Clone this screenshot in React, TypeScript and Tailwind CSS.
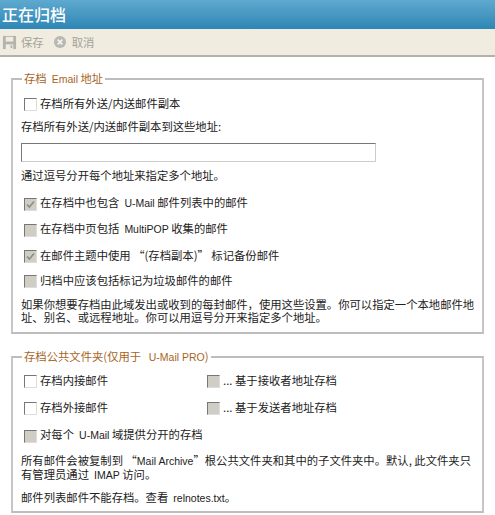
import React from "react";

const font = { fontFamily: '"Noto Sans CJK SC", sans-serif' };

function L({ children }: { children: React.ReactNode }) {
  return (
    <span className="text-[10.5px]" style={{ fontFamily: '"Liberation Sans", sans-serif' }}>
      {children}
    </span>
  );
}

function Check({ on, dim }: { on?: boolean; dim?: boolean }) {
  return (
    <span
      className={`inline-flex h-[13px] w-[13px] shrink-0 items-center justify-center border border-t-[#777] border-l-[#777] border-r-[#ddd] border-b-[#ddd] ${
        dim ? "bg-[#cfcdc4]" : "bg-white"
      }`}
    >
      {on && (
        <svg width="9" height="9" viewBox="0 0 9 9" fill="none" stroke="#8d8d88" strokeWidth="1.6">
          <path d="M1 4.5 L3.4 7 L8 1.5" />
        </svg>
      )}
    </span>
  );
}

function Row({ children, on, dim, className = "" }: { children: React.ReactNode; on?: boolean; dim?: boolean; className?: string }) {
  return (
    <div className={`flex items-center gap-[3px] ${className}`}>
      <Check on={on} dim={dim} />
      <span className="-translate-y-[1px] whitespace-nowrap">{children}</span>
    </div>
  );
}

export default function App() {
  return (
    <div className="h-[515px] w-[495px] overflow-hidden bg-white text-[11.33px] leading-[13px] text-[#222]" style={font}>
      <div className="flex h-[29px] items-center bg-gradient-to-b from-[#5ea9cf] to-[#2d86b5] pl-[2px] text-[16px] font-medium text-white">
        正在归档
      </div>
      <div className="flex h-[28px] items-center border-b-2 border-[#b3b1a8] bg-[#f0ecdf] pl-[2px] text-[#a3a29b]">
        <svg width="15" height="15" viewBox="0 0 16 16">
          <path d="M1 1h14v14H1z" fill="#b4b4ae" />
          <path d="M4 2h8v5H4z" fill="#f0ecdf" />
          <path d="M4 10h8v5H4z" fill="#f0ecdf" />
          <path d="M9 11h2v3H9z" fill="#b4b4ae" />
        </svg>
        <span className="ml-[4px]">保存</span>
        <svg className="ml-[9px]" width="14" height="14" viewBox="0 0 15 15">
          <circle cx="7.5" cy="7.5" r="6.5" fill="#b9b9b3" />
          <path d="M5 5l5 5M10 5l-5 5" stroke="#f4f4f0" strokeWidth="1.8" />
        </svg>
        <span className="ml-[5px]">取消</span>
      </div>

      <fieldset className="mx-[11px] mt-[15px] h-[262px] border-2 border-[#bdbdbd] border-x-[#c6c6c6] pl-[8px] pr-[6px]">
        <legend className="ml-[1px] px-[2px] text-[#a8651f]">
          存档&nbsp;&nbsp;<L>Email</L>&nbsp;地址
        </legend>
        <Row className="mt-[12px] ml-[3px]">存档所有外送/内送邮件副本</Row>
        <p className="mt-[9px]">存档所有外送/内送邮件副本到这些地址:</p>
        <input
          readOnly
          className="mt-[10px] block h-[19px] w-[355px] border border-t-[#777] border-l-[#777] border-r-[#ccc] border-b-[#ccc] bg-white"
        />
        <p className="mt-[7px]">通过逗号分开每个地址来指定多个地址。</p>
        <Row className="mt-[15px] ml-[3px]" on dim>
          在存档中也包含&nbsp;&nbsp;<L>U-Mail</L>&nbsp;邮件列表中的邮件
        </Row>
        <Row className="mt-[12px] ml-[3px]" dim>
          在存档中页包括&nbsp;&nbsp;<L>MultiPOP</L>&nbsp;收集的邮件
        </Row>
        <Row className="mt-[13px] ml-[3px]" on dim>
          在邮件主题中使用 “(存档副本)” 标记备份邮件
        </Row>
        <Row className="mt-[12px] ml-[3px]" dim>
          归档中应该包括标记为垃圾邮件的邮件
        </Row>
        <p className="mt-[10px]">
          如果你想要存档由此域发出或收到的每封邮件，使用这些设置。你可以指定一个本地邮件地址、别名、或远程地址。你可以用逗号分开来指定多个地址。
        </p>
      </fieldset>

      <fieldset className="mx-[11px] mt-[16px] h-[163px] border-2 border-[#bdbdbd] border-x-[#c6c6c6] pl-[8px] pr-[6px]">
        <legend className="ml-[1px] px-[2px] text-[#a8651f]">
          存档公共文件夹(仅用于&nbsp;&nbsp;&nbsp;<L>U-Mail PRO</L>)
        </legend>
        <div className="ml-[3px] mt-[11px] grid grid-cols-[183px_1fr] gap-y-[14px]">
          <Row>存档内接邮件</Row>
          <Row dim>... 基于接收者地址存档</Row>
          <Row>存档外接邮件</Row>
          <Row dim>... 基于发送者地址存档</Row>
        </div>
        <Row className="ml-[3px] mt-[14px]" dim>
          对每个&nbsp;&nbsp;<L>U-Mail</L>&nbsp;域提供分开的存档
        </Row>
        <p className="mt-[11px]">
          所有邮件会被复制到 “<L>Mail Archive</L>”根公共文件夹和其中的子文件夹中。默认, 此文件夹只有管理员通过&nbsp;&nbsp;<L>IMAP</L>&nbsp;访问。
        </p>
        <p className="mt-[9px]">
          邮件列表邮件不能存档。查看&nbsp;&nbsp;<L>relnotes.txt</L>。
        </p>
      </fieldset>
    </div>
  );
}
